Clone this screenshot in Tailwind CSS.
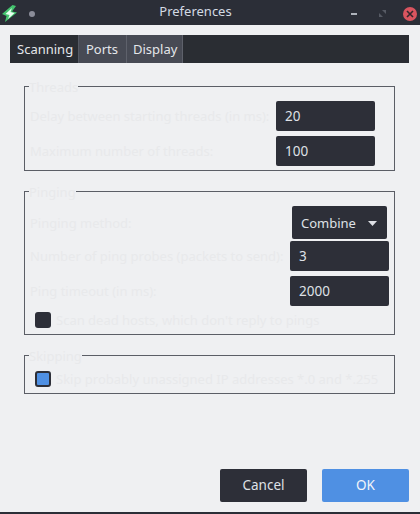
<!doctype html>
<html><head><meta charset="utf-8"><script src="https://cdn.jsdelivr.net/npm/@tailwindcss/browser@4"></script></head>
<body class="m-0">
<div class="w-[420px] h-[514px] flex flex-col bg-[#eff0f2] font-['Noto_Sans',sans-serif] text-[13px] overflow-hidden">
  <div class="h-[25px] shrink-0 bg-[#2b2e37] flex items-center pt-[2px] text-[#d3dae3]">
    <svg class="ml-[1px] w-[18px] h-[18px]" viewBox="0 0 18 18"><path d="M11.5 0 L1 9 L5.5 11 L4 17 L16 7.5 L11 6.5 L15 1Z" fill="#45c46f"/><path d="M11 3 L4.5 9 L8.5 10 L7 14 L13.5 8 L9.5 7Z" fill="#eafff0"/></svg>
    <div class="ml-[10px] w-[6px] h-[6px] rounded-full bg-[#8b8d99]"></div>
    <div class="flex-1 text-center pl-[5px] -mt-[3px] text-[13px]">Preferences</div>
    <div class="w-[6px] h-[2px] bg-[#aeb3bb] mr-[21px]"></div>
    <svg class="w-[9px] h-[9px] mr-[16px]" viewBox="0 0 9 9"><path d="M1 8 L1 4 L5 8Z M8 1 L8 5 L4 1Z" fill="#565a64"/></svg>
    <div class="w-[14px] h-[14px] mr-[3px] rounded-full bg-[#d9545f] flex items-center justify-center">
      <svg class="w-[8px] h-[8px]" viewBox="0 0 8 8"><path d="M1 1 L7 7 M7 1 L1 7" stroke="#33272d" stroke-width="1.6"/></svg>
    </div>
  </div>
  <div class="flex-1 flex flex-col px-[10px] pt-[10px]">
    <div class="h-[28px] w-[399px] bg-[#2a2d33] flex text-[#e4e6ea]">
      <div class="w-[69px] flex items-center pl-[7px] pt-[2px] border-r border-[#555963]">Scanning</div>
      <div class="w-[48px] flex items-center pl-[7px] pt-[2px] bg-[#474a54] border-r border-[#5e616b]">Ports</div>
      <div class="w-[56px] flex items-center pl-[6px] pt-[2px] bg-[#474a54] border-r border-[#5e616b]">Display</div>
    </div>
    <div class="mx-[14px] w-[371px] text-[#e8e9eb]">
      <fieldset class="mt-[15px] h-[93px] border border-[#5b5e66] px-[5px]">
        <legend class="h-[16px] leading-[16px] pt-[1px] -ml-[1px]">Threads</legend>
        <div class="flex items-center justify-between h-[30px] mt-[7px] pr-[14px]"><span class="pt-[2px]">Delay between starting threads (in ms):</span><div class="w-[99px] h-[30px] rounded-[2px] bg-[#2d2f38] text-[#dfe1e6] flex items-center pl-[9px] text-[13.5px]">20</div></div>
        <div class="flex items-center justify-between h-[30px] mt-[5px] pr-[14px]"><span class="pt-[2px]">Maximum number of threads:</span><div class="w-[99px] h-[30px] rounded-[2px] bg-[#2d2f38] text-[#dfe1e6] flex items-center pl-[9px] text-[13.5px]">100</div></div>
      </fieldset>
      <fieldset class="mt-[12px] h-[152px] border border-[#5b5e66] px-[5px]">
        <legend class="h-[16px] leading-[16px] pt-[1px] -ml-[1px]">Pinging</legend>
        <div class="flex items-center justify-between h-[33px] mt-[7px] pr-[2px]"><span class="pt-[2px]">Pinging method:</span>
          <div class="w-[95px] h-[33px] rounded-[2px] bg-[#2d2f38] text-[#dfe1e6] flex items-center justify-between pl-[9px] pr-[10px] pt-[2px] text-[13px]">Combine<svg class="w-[9px] h-[5px]" viewBox="0 0 9 5"><path d="M0 0 H9 L4.5 5Z" fill="#dfe1e6"/></svg></div></div>
        <div class="flex items-center justify-between h-[30px] mt-[2px]"><span class="pt-[2px]">Number of ping probes (packets to send):</span><div class="w-[99px] h-[30px] rounded-[2px] bg-[#2d2f38] text-[#dfe1e6] flex items-center pl-[9px] text-[13.5px]">3</div></div>
        <div class="flex items-center justify-between h-[30px] mt-[5px]"><span class="pt-[2px]">Ping timeout (in ms):</span><div class="w-[99px] h-[30px] rounded-[2px] bg-[#2d2f38] text-[#dfe1e6] flex items-center pl-[9px] text-[13.5px]">2000</div></div>
        <div class="flex items-center h-[20px] mt-[4px] pl-[5px] gap-[5px]"><div class="w-[16px] h-[16px] rounded-[3px] bg-[#2d2f38]"></div><span class="pt-[2px]">Scan dead hosts, which don't reply to pings</span></div>
      </fieldset>
      <fieldset class="mt-[12px] h-[47px] border border-[#5b5e66] px-[5px]">
        <legend class="h-[16px] leading-[16px] pt-[1px] -ml-[1px]">Skipping</legend>
        <div class="flex items-center h-[20px] mt-[6px] pl-[5px] gap-[5px]"><div class="w-[16px] h-[16px] rounded-[3px] bg-[#4f90e3] border-2 border-[#2d2f38]"></div><span class="pt-[2px]">Skip probably unassigned IP addresses *.0 and *.255</span></div>
      </fieldset>
    </div>
    <div class="mt-auto mb-[10px] flex justify-end gap-[15px] pr-[1px] text-[13.5px]">
      <div class="w-[87px] h-[33px] rounded-[2px] bg-[#2d2f38] text-[#dfe1e6] flex items-center justify-center">Cancel</div>
      <div class="w-[87px] h-[33px] rounded-[2px] bg-[#4f90e3] text-[#f2f5f9] flex items-center justify-center">OK</div>
    </div>
  </div>
  <div class="h-[2px] shrink-0 bg-[#2b2e37]"></div>
</div>
</body></html>
